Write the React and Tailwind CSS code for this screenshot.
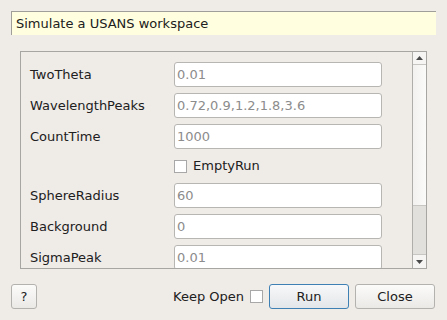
import React from "react";

const rows = [
  { label: "TwoTheta", value: "0.01" },
  { label: "WavelengthPeaks", value: "0.72,0.9,1.2,1.8,3.6" },
  { label: "CountTime", value: "1000" },
  { checkbox: "EmptyRun" },
  { label: "SphereRadius", value: "60" },
  { label: "Background", value: "0" },
  { label: "SigmaPeak", value: "0.01" },
];

function Row({ r }) {
  if (r.checkbox) {
    return (
      <div className="flex h-[22px] shrink-0 items-center">
        <div className="w-[144px]" />
        <div className="h-[13px] w-[13px] border border-[#a8a8a8] bg-white" />
        <span className="ml-[6px] text-[#202020]">{r.checkbox}</span>
      </div>
    );
  }
  return (
    <div className="flex h-[25px] shrink-0 items-center">
      <span className="w-[144px] text-[#202020]">{r.label}</span>
      <div className="flex h-[25px] w-[208px] items-center rounded-[3px] border border-[#b8b6b3] bg-white pl-[2px] text-[#8c8c8c]">
        {r.value}
      </div>
    </div>
  );
}

export default function App() {
  return (
    <div
      className="flex h-[320px] w-[447px] flex-col overflow-hidden bg-[#efebe7] text-[13px]"
      style={{ fontFamily: '"DejaVu Sans", sans-serif' }}
    >
      <div className="mx-[11px] mt-[11px] flex h-[24px] items-center border-t border-l border-[#a09e9b] bg-[#ffffdf] pl-[4px] text-[#202020]">
        Simulate a USANS workspace
      </div>
      <div className="ml-[20px] mr-[20px] mt-[16px] flex h-[218px] border border-[#a8a6a3]">
        <div className="flex flex-1 flex-col gap-[6px] overflow-hidden pl-[9px] pt-[10px]">
          {rows.map((r, i) => (
            <Row key={i} r={r} />
          ))}
        </div>
        <div className="flex w-[14px] flex-col border-l border-[#b0aeab] bg-[#e2e0dd]">
          <div className="flex h-[13px] items-center justify-center border-b border-[#c8c6c3] bg-[#f6f5f4]">
            <svg width="7" height="4" viewBox="0 0 7 4">
              <polygon points="0,4 7,4 3.5,0" fill="#4a4a4a" />
            </svg>
          </div>
          <div className="h-[141px] border-b border-[#c8c6c3] bg-gradient-to-r from-[#f2f1f0] to-[#fbfbfa]" />
          <div className="flex-1" />
          <div className="flex h-[14px] items-center justify-center border-t border-[#c8c6c3] bg-[#f6f5f4]">
            <svg width="7" height="4" viewBox="0 0 7 4">
              <polygon points="0,0 7,0 3.5,4" fill="#4a4a4a" />
            </svg>
          </div>
        </div>
      </div>
      <div className="mt-[15px] flex items-center pl-[11px] pr-[12px]">
        <div className="flex h-[25px] w-[26px] items-center justify-center rounded-[3px] border border-[#b4b2af] bg-gradient-to-b from-[#fbfbfa] to-[#ebe9e6] text-[#202020]">
          ?
        </div>
        <div className="flex-1" />
        <span className="text-[#202020]">Keep Open</span>
        <div className="ml-[6px] h-[13px] w-[13px] border border-[#a8a8a8] bg-white" />
        <div className="ml-[6px] flex h-[25px] w-[80px] items-center justify-center rounded-[3px] border border-[#3f80b4] bg-gradient-to-b from-[#f7f8f9] to-[#e3e6e9] text-[#202020]">
          Run
        </div>
        <div className="ml-[6px] flex h-[25px] w-[80px] items-center justify-center rounded-[3px] border border-[#b4b2af] bg-gradient-to-b from-[#fbfbfa] to-[#ebe9e6] text-[#202020]">
          Close
        </div>
      </div>
    </div>
  );
}
